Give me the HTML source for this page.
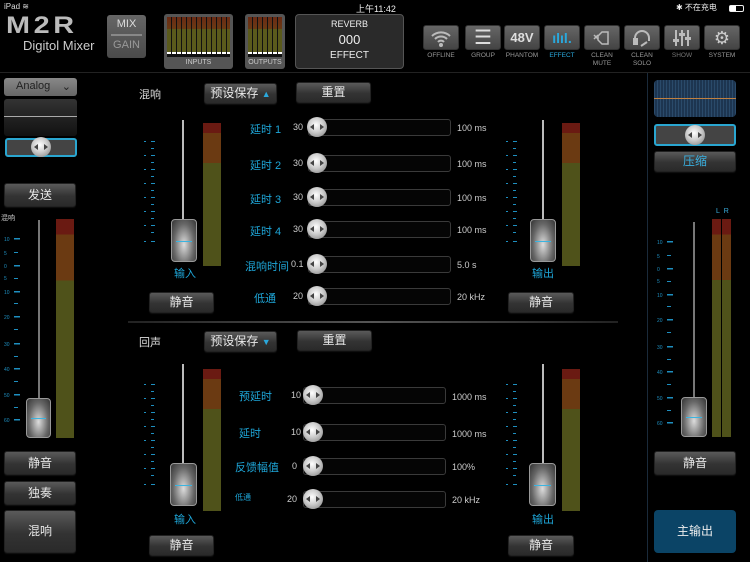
<!DOCTYPE html>
<html><head><meta charset="utf-8"><style>
*{margin:0;padding:0;box-sizing:border-box}
body{width:750px;height:562px;background:#000;overflow:hidden;position:relative;font-family:"Liberation Sans","Noto Sans CJK SC",sans-serif;color:#ddd}
.a{position:absolute}
.btn{position:absolute;background:linear-gradient(#5a5a5a,#333 55%,#2a2a2a);border:1px solid #222;border-radius:3px;color:#e8e8e8;font-size:12px;text-align:center;box-shadow:0 1px 1px #111}
.lbl{position:absolute;color:#1ea6d8;font-size:11px}
.wt{position:absolute;color:#ccc;font-size:9px}
.track{position:absolute;height:17px;background:#050505;border:1px solid #3a3a3a;border-radius:3px}
.knob{position:absolute;width:20px;height:20px;border-radius:50%;background:radial-gradient(circle at 45% 40%,#fff,#ccc 45%,#888 90%);}
.knob:before{content:"";position:absolute;left:3px;top:7px;border:3px solid transparent;border-right:4px solid #444;border-left:0}
.knob:after{content:"";position:absolute;right:3px;top:7px;border:3px solid transparent;border-left:4px solid #444;border-right:0}
.fl{position:absolute;width:2px;background:#bbb}
.th{position:absolute;border-radius:4px;background:radial-gradient(ellipse at 50% 60%,#ddd,#666 60%,#333);border:1px solid #999}
.th:after{content:"";position:absolute;left:4px;right:4px;top:50%;height:1px;background:#3ab4e0}
.mt{position:absolute;background:linear-gradient(#6a1a12 0,#6a1a12 7%,#6b3a12 7%,#6b3a12 28%,#4f521a 28%)}
.ic{position:absolute;top:25px;width:36px;height:25px;border-radius:3px;background:linear-gradient(#666,#444);border:1px solid #333;color:#ddd;text-align:center;font-size:16px;line-height:24px}
.ic svg{margin-top:3px}
.il{position:absolute;top:52px;width:44px;text-align:center;font-size:6.5px;color:#999;line-height:8px}
</style></head><body>
<!-- status -->
<div class="a" style="left:4px;top:2px;font-size:8px;color:#ddd">iPad ≋</div>
<div class="a" style="left:356px;top:2px;font-size:9px;color:#eee">上午11:42</div>
<div class="a" style="left:676px;top:2px;font-size:8px;color:#eee">✱ 不在充电</div>
<div class="a" style="left:729px;top:5px;width:15px;height:7px;border:1px solid #eee;border-radius:2px"><div style="width:6px;height:5px;background:#fff"></div></div>
<!-- header -->
<div class="a" style="left:6px;top:12px;font-size:24px;font-weight:bold;color:#bbb;letter-spacing:3px;transform:scaleX(1.2);transform-origin:left">M2R</div>
<div class="a" style="left:23px;top:38px;font-size:13px;color:#ccc">Digitol Mixer</div>
<div class="a" style="left:107px;top:15px;width:39px;height:43px;background:linear-gradient(#666,#4a4a4a);border-radius:3px;text-align:center;font-size:11px;line-height:19px;color:#ddd">MIX<div style="height:2px;background:#888;margin:0 4px"></div><span style="color:#999">GAIN</span></div>
<div class="a" style="left:164px;top:14px;width:69px;height:55px;background:#555;border-radius:3px"></div>
<div class="a" style="left:167px;top:17px;width:63px;height:40px;background:repeating-linear-gradient(90deg,#0000 0 4px,#111 4px 5px),linear-gradient(#6a2a14 0,#6a3a14 30%,#5a5a1c 30%,#5a5a1c 88%,#fff 88%,#fff 93%,#111 93%)"></div>
<div class="a" style="left:164px;top:59px;width:69px;font-size:7px;text-align:center;color:#ccc">INPUTS</div>
<div class="a" style="left:245px;top:14px;width:40px;height:55px;background:#555;border-radius:3px"></div>
<div class="a" style="left:248px;top:17px;width:34px;height:40px;background:repeating-linear-gradient(90deg,#0000 0 4px,#111 4px 5px),linear-gradient(#6a2a14 0,#6a3a14 30%,#5a5a1c 30%,#5a5a1c 88%,#fff 88%,#fff 93%,#111 93%)"></div>
<div class="a" style="left:245px;top:59px;width:40px;font-size:7px;text-align:center;color:#ccc">OUTPUTS</div>
<div class="a" style="left:295px;top:14px;width:109px;height:55px;background:#2a2a2a;border:1px solid #555;border-radius:4px;text-align:center;color:#eee">
<div style="font-size:9px;margin-top:4px">REVERB</div><div style="font-size:13px;margin-top:3px">000</div><div style="font-size:10px;margin-top:3px">EFFECT</div></div>
<div class="ic" style="left:423px"><svg width="22" height="18" viewBox="0 0 22 18" fill="none" stroke="#bbb" stroke-width="2"><path d="M2 7a13 13 0 0 1 18 0M5 10a8.5 8.5 0 0 1 12 0M8 13a4 4 0 0 1 6 0"/><circle cx="11" cy="16" r="1" fill="#bbb"/></svg></div><div class="il" style="left:419px">OFFLINE</div>
<div class="ic" style="left:465px;font-size:20px">☰</div><div class="il" style="left:461px">GROUP</div>
<div class="ic" style="left:504px;font-weight:bold;font-size:13px">48V</div><div class="il" style="left:500px">PHANTOM</div>
<div class="ic" style="left:544px;color:#2aa8dc;font-size:14px;font-weight:bold">ılıl.</div><div class="il" style="left:540px;color:#2aa8dc">EFFECT</div>
<div class="ic" style="left:584px"><svg width="22" height="18" viewBox="0 0 22 18" fill="none" stroke="#bbb" stroke-width="1.5"><path d="M11 3h6v12h-6l-4-4V7z"/><path d="M3 6l4 4M7 6l-4 4"/></svg></div><div class="il" style="left:580px">CLEAN<br>MUTE</div>
<div class="ic" style="left:624px"><svg width="22" height="18" viewBox="0 0 22 18" fill="none" stroke="#bbb" stroke-width="2"><path d="M4 12V9a7 7 0 0 1 14 0v3"/><rect x="3" y="10" width="3" height="5" fill="#bbb"/><path d="M16 13l-6 4"/></svg></div><div class="il" style="left:620px">CLEAN<br>SOLO</div>
<div class="ic" style="left:664px"><svg width="22" height="18" viewBox="0 0 22 18" fill="#bbb"><rect x="4" y="1" width="2" height="16"/><rect x="10" y="1" width="2" height="16"/><rect x="16" y="1" width="2" height="16"/><rect x="2" y="10" width="6" height="3"/><rect x="8" y="4" width="6" height="3"/><rect x="14" y="8" width="6" height="3"/></svg></div><div class="il" style="left:660px;color:#777">SHOW</div>
<div class="ic" style="left:704px;font-size:18px;color:#ccc">⚙</div><div class="il" style="left:700px">SYSTEM</div>
<div class="a" style="left:0;top:72px;width:750px;height:1px;background:#222"></div>
<div class="a" style="left:647px;top:73px;width:1px;height:489px;background:#1a2a3a"></div>
<!-- left panel -->
<div class="a" style="left:4px;top:78px;width:73px;height:18px;background:linear-gradient(#888,#666);border-radius:3px;font-size:11px;color:#222;padding:2px 0 0 12px">Analog <span style="position:absolute;right:6px">⌄</span></div>
<div class="a" style="left:4px;top:99px;width:73px;height:37px;background:linear-gradient(#333,#111);border-radius:3px"><div style="margin-top:17px;height:1px;background:#aaa"></div></div>
<div class="a" style="left:5px;top:138px;width:72px;height:19px;border:2px solid #2aa6d0;border-radius:3px;background:#444"></div>
<div class="knob" style="left:31px;top:137px"></div>
<div class="btn" style="left:4px;top:183px;width:72px;height:24px;line-height:22px">发送</div>
<div class="a" style="left:1px;top:213px;font-size:7px;color:#ccc">混响</div>
<div class="fl" style="left:38px;top:220px;height:180px;background:#777"></div>
<div class="mt" style="left:56px;top:219px;width:18px;height:219px"></div>
<div class="th" style="left:26px;top:398px;width:25px;height:40px"></div>
<div class="btn" style="left:4px;top:451px;width:72px;height:24px;line-height:22px">静音</div>
<div class="btn" style="left:4px;top:481px;width:72px;height:24px;line-height:22px">独奏</div>
<div class="btn" style="left:4px;top:510px;width:72px;height:43px;line-height:41px">混响</div>
<!-- right panel -->
<div class="a" style="left:654px;top:80px;width:82px;height:37px;border-radius:4px;background:repeating-linear-gradient(90deg,#2a4a6a 0 1px,#1d3550 1px 3px)"><div style="margin-top:18px;height:1px;background:#c08040"></div></div>
<div class="a" style="left:654px;top:124px;width:82px;height:22px;border:2px solid #2aa6d0;border-radius:3px;background:#444"></div>
<div class="knob" style="left:685px;top:125px"></div>
<div class="btn" style="left:654px;top:151px;width:82px;height:21px;line-height:19px;color:#3ab0e0">压缩</div>
<div class="a" style="left:716px;top:208px;font-size:7px;color:#3ab0e0">L&nbsp;&nbsp;R</div>
<div class="fl" style="left:693px;top:222px;height:178px;background:#777"></div>
<div class="mt" style="left:712px;top:219px;width:9px;height:218px"></div>
<div class="mt" style="left:722px;top:219px;width:9px;height:218px"></div>
<div class="th" style="left:681px;top:397px;width:26px;height:40px"></div>
<div class="btn" style="left:654px;top:451px;width:82px;height:24px;line-height:22px">静音</div>
<div class="a" style="left:654px;top:510px;width:82px;height:43px;background:#0b4466;border-radius:4px;text-align:center;line-height:43px;font-size:12px;color:#eee">主输出</div>
<!-- scales -->
<svg class="a" style="left:0;top:0" width="750" height="562">
<g fill="#1e8fc0" font-size="5" font-family="Liberation Sans">
<g id="s1">
<rect x="14" y="238" width="6" height="1.5"/><rect x="14" y="252" width="4" height="1"/><rect x="14" y="265" width="6" height="1.5"/><rect x="14" y="278" width="4" height="1"/><rect x="14" y="291" width="6" height="1.5"/><rect x="14" y="303" width="4" height="1"/><rect x="14" y="316" width="6" height="1.5"/><rect x="14" y="329" width="4" height="1"/><rect x="14" y="343" width="6" height="1.5"/><rect x="14" y="356" width="4" height="1"/><rect x="14" y="368" width="6" height="1.5"/><rect x="14" y="381" width="4" height="1"/><rect x="14" y="394" width="6" height="1.5"/><rect x="14" y="407" width="4" height="1"/><rect x="14" y="419" width="6" height="1.5"/>
<text x="4" y="241">10</text><text x="4" y="255">5</text><text x="4" y="268">0</text><text x="4" y="280">5</text><text x="4" y="294">10</text><text x="4" y="319">20</text><text x="4" y="346">30</text><text x="4" y="371">40</text><text x="4" y="397">50</text><text x="4" y="422">60</text>
</g>
<use href="#s1" x="653" y="3"/>
</g>
<g fill="#1e8fc0">
<g id="s2"><rect x="151" y="141" width="4" height="1"/><rect x="151" y="148" width="3" height="1"/><rect x="151" y="155" width="4" height="1"/><rect x="151" y="162" width="3" height="1"/><rect x="151" y="169" width="4" height="1"/><rect x="151" y="176" width="3" height="1"/><rect x="151" y="183" width="4" height="1"/><rect x="151" y="190" width="3" height="1"/><rect x="151" y="197" width="4" height="1"/><rect x="151" y="204" width="3" height="1"/><rect x="151" y="211" width="4" height="1"/><rect x="151" y="218" width="3" height="1"/><rect x="151" y="225" width="4" height="1"/><rect x="151" y="232" width="3" height="1"/><rect x="151" y="241" width="4" height="1"/>
<rect x="144" y="141" width="2" height="1"/><rect x="144" y="155" width="2" height="1"/><rect x="144" y="169" width="2" height="1"/><rect x="144" y="183" width="2" height="1"/><rect x="144" y="197" width="2" height="1"/><rect x="144" y="211" width="2" height="1"/><rect x="144" y="225" width="2" height="1"/><rect x="144" y="241" width="2" height="1"/></g>
<use href="#s2" x="362" y="0"/><use href="#s2" x="0" y="243"/><use href="#s2" x="362" y="243"/>
</g>
</svg>
<!-- section divider -->
<div class="a" style="left:128px;top:321px;width:490px;height:2px;background:linear-gradient(90deg,#222,#555,#222)"></div>
<!-- TOP section -->
<div class="a" style="left:139px;top:86px;font-size:11px;color:#ddd">混响</div>
<div class="btn" style="left:204px;top:83px;width:73px;height:21px;line-height:19px">预设保存 <span style="color:#2aa8dc;font-size:9px">▲</span></div>
<div class="btn" style="left:296px;top:82px;width:75px;height:21px;line-height:19px">重置</div>
<div class="fl" style="left:182px;top:120px;height:100px"></div>
<div class="th" style="left:171px;top:219px;width:26px;height:43px"></div>
<div class="mt" style="left:203px;top:123px;width:18px;height:143px"></div>
<div class="lbl" style="left:174px;top:265px">输入</div>
<div class="btn" style="left:149px;top:292px;width:65px;height:21px;line-height:19px">静音</div>
<div class="fl" style="left:542px;top:120px;height:100px"></div>
<div class="th" style="left:530px;top:219px;width:26px;height:43px"></div>
<div class="mt" style="left:562px;top:123px;width:18px;height:143px"></div>
<div class="lbl" style="left:532px;top:265px">输出</div>
<div class="btn" style="left:508px;top:292px;width:66px;height:21px;line-height:19px">静音</div>

<div class="lbl" style="left:250px;top:121px">延时 1</div><div class="wt" style="left:293px;top:122px">30</div><div class="track" style="left:308px;top:119px;width:143px"></div><div class="knob" style="left:307px;top:117px"></div><div class="wt" style="left:457px;top:123px">100 ms</div>
<div class="lbl" style="left:250px;top:157px">延时 2</div><div class="wt" style="left:293px;top:158px">30</div><div class="track" style="left:308px;top:155px;width:143px"></div><div class="knob" style="left:307px;top:153px"></div><div class="wt" style="left:457px;top:159px">100 ms</div>
<div class="lbl" style="left:250px;top:191px">延时 3</div><div class="wt" style="left:293px;top:192px">30</div><div class="track" style="left:308px;top:189px;width:143px"></div><div class="knob" style="left:307px;top:187px"></div><div class="wt" style="left:457px;top:193px">100 ms</div>
<div class="lbl" style="left:250px;top:223px">延时 4</div><div class="wt" style="left:293px;top:224px">30</div><div class="track" style="left:308px;top:221px;width:143px"></div><div class="knob" style="left:307px;top:219px"></div><div class="wt" style="left:457px;top:225px">100 ms</div>
<div class="lbl" style="left:245px;top:258px">混响时间</div><div class="wt" style="left:291px;top:259px">0.1</div><div class="track" style="left:308px;top:256px;width:143px"></div><div class="knob" style="left:307px;top:254px"></div><div class="wt" style="left:457px;top:260px">5.0 s</div>
<div class="lbl" style="left:254px;top:290px">低通</div><div class="wt" style="left:293px;top:291px">20</div><div class="track" style="left:308px;top:288px;width:143px"></div><div class="knob" style="left:307px;top:286px"></div><div class="wt" style="left:457px;top:292px">20 kHz</div>
<!-- BOTTOM section -->
<div class="a" style="left:139px;top:334px;font-size:11px;color:#ddd">回声</div>
<div class="btn" style="left:204px;top:331px;width:73px;height:21px;line-height:19px">预设保存 <span style="color:#2aa8dc;font-size:9px">▼</span></div>
<div class="btn" style="left:297px;top:330px;width:75px;height:21px;line-height:19px">重置</div>
<div class="fl" style="left:182px;top:364px;height:100px"></div>
<div class="th" style="left:170px;top:463px;width:27px;height:43px"></div>
<div class="mt" style="left:203px;top:369px;width:18px;height:142px"></div>
<div class="lbl" style="left:174px;top:511px">输入</div>
<div class="btn" style="left:149px;top:535px;width:65px;height:21px;line-height:19px">静音</div>
<div class="fl" style="left:542px;top:364px;height:100px"></div>
<div class="th" style="left:529px;top:463px;width:27px;height:43px"></div>
<div class="mt" style="left:562px;top:369px;width:18px;height:142px"></div>
<div class="lbl" style="left:532px;top:511px">输出</div>
<div class="btn" style="left:508px;top:535px;width:66px;height:21px;line-height:19px">静音</div>

<div class="lbl" style="left:239px;top:388px">预延时</div><div class="wt" style="left:291px;top:390px">10</div><div class="track" style="left:303px;top:387px;width:143px"></div><div class="knob" style="left:303px;top:385px"></div><div class="wt" style="left:452px;top:392px">1000 ms</div>
<div class="lbl" style="left:239px;top:425px">延时</div><div class="wt" style="left:291px;top:427px">10</div><div class="track" style="left:303px;top:424px;width:143px"></div><div class="knob" style="left:303px;top:422px"></div><div class="wt" style="left:452px;top:429px">1000 ms</div>
<div class="lbl" style="left:235px;top:459px">反馈幅值</div><div class="wt" style="left:292px;top:461px">0</div><div class="track" style="left:303px;top:458px;width:143px"></div><div class="knob" style="left:303px;top:456px"></div><div class="wt" style="left:452px;top:462px">100%</div>
<div class="lbl" style="left:235px;top:492px;font-size:8px">低通</div><div class="wt" style="left:287px;top:494px">20</div><div class="track" style="left:303px;top:491px;width:143px"></div><div class="knob" style="left:303px;top:489px"></div><div class="wt" style="left:452px;top:495px">20 kHz</div>
</body></html>
